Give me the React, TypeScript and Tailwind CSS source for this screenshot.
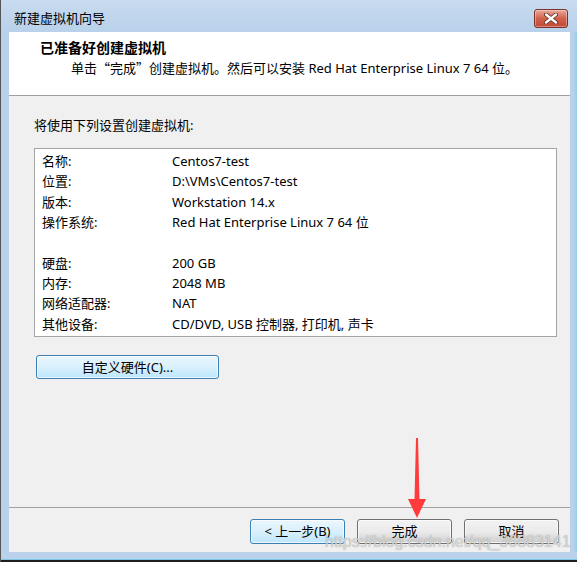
import React from 'react';

const rows: [string, string][] = [
  ['名称:', 'Centos7-test'],
  ['位置:', 'D:\\VMs\\Centos7-test'],
  ['版本:', 'Workstation 14.x'],
  ['操作系统:', 'Red Hat Enterprise Linux 7 64 位'],
  ['', ''],
  ['硬盘:', '200 GB'],
  ['内存:', '2048 MB'],
  ['网络适配器:', 'NAT'],
  ['其他设备:', 'CD/DVD, USB 控制器, 打印机, 声卡'],
];

const font = { fontFamily: '"Noto Sans", "Noto Sans CJK SC", sans-serif' };
const cjk = { fontFamily: '"Noto Sans CJK SC", sans-serif' };

const App = () => {
  return (
    <div
      className="relative w-[577px] h-[562px] overflow-hidden flex flex-col bg-[#b9d1ea] border-l border-[#555] text-[13px] text-black"
      style={font}
    >
      {/* Title bar */}
      <div className="h-[32px] shrink-0 flex items-center justify-between pl-[13px] pr-[9px] pt-[4px] bg-gradient-to-b from-[#c9dbef] to-[#b9d1ea]">
        <span className="leading-[16px]">新建虚拟机向导</span>
        <div className="w-[34px] h-[19px] rounded-[3px] border border-[#7a3128] bg-gradient-to-b from-[#e9a89a] via-[#d0604c] to-[#c04a35] flex items-center justify-center shadow-[inset_0_0_0_1px_rgba(255,255,255,0.35)]">
          <svg width="14" height="11" viewBox="0 0 14 11">
            <path d="M2 1.5 L12 9.5 M12 1.5 L2 9.5" stroke="#5a2a22" strokeWidth="4" strokeLinecap="round" />
            <path d="M2 1.5 L12 9.5 M12 1.5 L2 9.5" stroke="#ffffff" strokeWidth="2.4" strokeLinecap="round" />
          </svg>
        </div>
      </div>

      {/* Frame + client */}
      <div className="flex flex-1">
        <div className="w-[8px] shrink-0" />
        <div className="w-[561px] flex flex-col bg-[#f0f0f0]">
          {/* Header */}
          <div className="h-[64px] shrink-0 bg-white border-b border-[#a0a0a0] pl-[31px] pt-[7px]">
            <div className="font-bold text-[14px] leading-[18px]">已准备好创建虚拟机</div>
            <div className="mt-[3px] pl-[31px] leading-[16px] whitespace-nowrap">
              <span style={cjk}>单击“完成”创建虚拟机。然后可以安装</span> Red Hat Enterprise Linux 7 64 位。
            </div>
          </div>

          {/* Body */}
          <div className="flex-1 flex flex-col pl-[25px] pt-[21px]">
            <div className="leading-[16px]">将使用下列设置创建虚拟机:</div>
            <div className="mt-[15px] w-[523px] h-[189px] bg-white border border-[#a5a5a5] pt-[2px] pl-[7px]">
              {rows.map(([k, v], i) => (
                <div key={i} className="grid grid-cols-[130px_1fr] h-[20.3px] items-center leading-[16px] whitespace-nowrap">
                  <span>{k}</span>
                  <span>{v}</span>
                </div>
              ))}
            </div>
            <button className="mt-[18px] ml-[2px] w-[183px] h-[24px] rounded-[3px] border border-[#3c7fb1] bg-gradient-to-b from-[#eaf6fd] via-[#d9f0fc] to-[#bee6fd] shadow-[inset_0_0_0_1px_rgba(255,255,255,0.7)] text-[13px] leading-[16px]">
              自定义硬件(C)...
            </button>
          </div>

          {/* Footer */}
          <div className="border-t border-[#a0a0a0] h-[45px] shrink-0 flex justify-end items-start gap-[12px] pr-[11px] pt-[11px]">
            <button className="w-[95px] h-[25px] rounded-[3px] border border-[#3c7fb1] bg-gradient-to-b from-[#eaf6fd] via-[#d9f0fc] to-[#bee6fd] shadow-[inset_0_0_0_1px_rgba(255,255,255,0.7)] text-[13px]">
              &lt; 上一步(B)
            </button>
            <button className="w-[95px] h-[25px] rounded-[3px] border border-[#707070] bg-gradient-to-b from-[#f2f2f2] via-[#ebebeb] to-[#cfcfcf] shadow-[inset_0_0_0_1px_rgba(255,255,255,0.7)] text-[13px]">
              完成
            </button>
            <button className="w-[95px] h-[25px] rounded-[3px] border border-[#707070] bg-gradient-to-b from-[#f2f2f2] via-[#ebebeb] to-[#cfcfcf] shadow-[inset_0_0_0_1px_rgba(255,255,255,0.7)] text-[13px]">
              取消
            </button>
          </div>
        </div>
        <div className="flex-1 bg-gradient-to-r from-[#b9d1ea] via-[#b9d1ea] to-[#8fd0ee]" />
      </div>

      {/* Bottom frame */}
      <div className="h-[7px] shrink-0" />
      <div className="h-[1px] shrink-0 bg-[#7cc6e6]" />
      <div className="h-[2px] shrink-0 bg-[#1e1e1e]" />

      {/* Red annotation arrow */}
      <svg className="absolute left-[406px] top-[438px]" width="20" height="80" viewBox="0 0 20 80">
        <polygon points="9,0 11,0 12.5,61 19,61 10,80 1,61 7.5,61" fill="#ff3b3b" />
      </svg>

      {/* Watermark */}
      <div
        className="absolute left-[324px] top-[532px] text-[16px] leading-[20px] text-[#e4e4e4]/80 [text-shadow:0_0_1px_rgba(110,110,110,0.7)]"
        style={{ fontFamily: '"Liberation Sans", sans-serif' }}
      >
        https://blog.csdn.net/qq_36883141
      </div>
    </div>
  );
};

export default App;
